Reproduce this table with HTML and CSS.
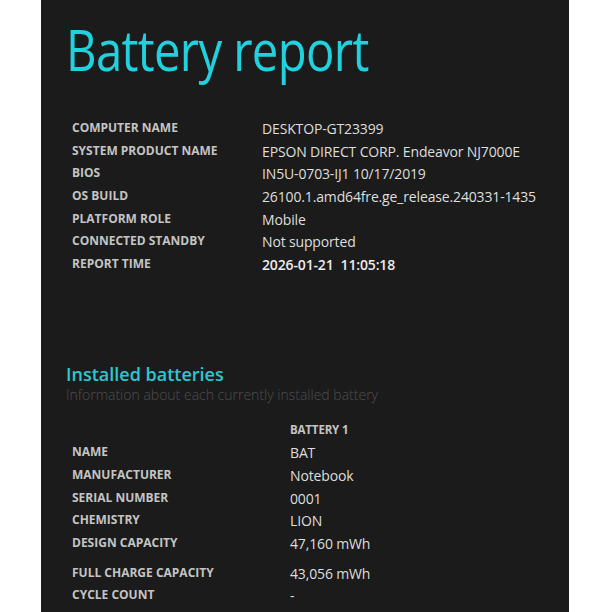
FILE: index.html
```html
<!DOCTYPE html>
<html>
<head>
<meta charset="utf-8">
<link rel="stylesheet" href="styles.css">
</head>
<body>
<div class="panel">
  <h1 class="title">Battery report</h1>
  <div class="info">
    <div class="row"><span class="label">COMPUTER NAME</span><span class="value">DESKTOP-GT23399</span></div>
    <div class="row"><span class="label">SYSTEM PRODUCT NAME</span><span class="value">EPSON DIRECT CORP. Endeavor NJ7000E</span></div>
    <div class="row"><span class="label">BIOS</span><span class="value">IN5U-0703-IJ1 10/17/2019</span></div>
    <div class="row"><span class="label">OS BUILD</span><span class="value">26100.1.amd64fre.ge_release.240331-1435</span></div>
    <div class="row"><span class="label">PLATFORM ROLE</span><span class="value">Mobile</span></div>
    <div class="row"><span class="label">CONNECTED STANDBY</span><span class="value">Not supported</span></div>
    <div class="row"><span class="label">REPORT TIME</span><span class="value strong">2026-01-21&nbsp; 11:05:18</span></div>
  </div>
  <h2 class="section">Installed batteries</h2>
  <div class="subtitle">Information about each currently installed battery</div>
  <div class="batteries">
    <div class="row head"><span class="label"></span><span class="value label">BATTERY 1</span></div>
    <div class="row"><span class="label">NAME</span><span class="value">BAT</span></div>
    <div class="row"><span class="label">MANUFACTURER</span><span class="value">Notebook</span></div>
    <div class="row"><span class="label">SERIAL NUMBER</span><span class="value">0001</span></div>
    <div class="row"><span class="label">CHEMISTRY</span><span class="value">LION</span></div>
    <div class="row"><span class="label">DESIGN CAPACITY</span><span class="value">47,160 mWh</span></div>
    <div class="row spaced"><span class="label">FULL CHARGE CAPACITY</span><span class="value">43,056 mWh</span></div>
    <div class="row"><span class="label">CYCLE COUNT</span><span class="value">-</span></div>
  </div>
</div>
</body>
</html>
```
FILE: styles.css
```css
html, body {
  margin: 0;
  padding: 0;
  background: #ffffff;
  height: 612px;
  overflow: hidden;
}
.panel {
  margin-left: 41px;
  width: 528px;
  height: 612px;
  background: #1b1b1b;
  font-family: "Open Sans", "Noto Sans", sans-serif;
  overflow: hidden;
  box-sizing: border-box;
  padding-top: 13px;
}
.title {
  margin: 0 0 0 25px;
  font-family: "Open Sans", sans-serif;
  font-weight: 400;
  font-size: 57px;
  line-height: 72px;
  color: #22d1de;
  letter-spacing: -0.8px;
  transform: scaleX(0.83);
  transform-origin: left center;
}
.info {
  margin-top: 31px;
  padding-left: 31px;
}
.row {
  display: flex;
  height: 22.7px;
  align-items: center;
}
.label {
  font-size: 12px;
  font-weight: 700;
  color: #c4c4c4;
  letter-spacing: 0;
}
.info .label { width: 190px; }
.batteries .label { width: 218px; }
.value {
  font-size: 14px;
  color: #dedede;
  letter-spacing: -0.15px;
  padding-top: 2px;
}
.value.strong { font-weight: 600; color: #ececec; }
.value.label { font-size: 11.5px; font-weight: 700; color: #c4c4c4; width: auto; padding-top: 0; }
.section {
  margin: 88px 0 0 25px;
  font-size: 18px;
  font-weight: 600;
  line-height: 22px;
  color: #2bc8d3;
}
.subtitle {
  margin-left: 25px;
  font-size: 14px;
  font-weight: 300;
  color: #4e4e4e;
  line-height: 20px;
}
.batteries {
  margin-top: 13px;
  padding-left: 31px;
}
.row.spaced { margin-top: 7px; }
```
